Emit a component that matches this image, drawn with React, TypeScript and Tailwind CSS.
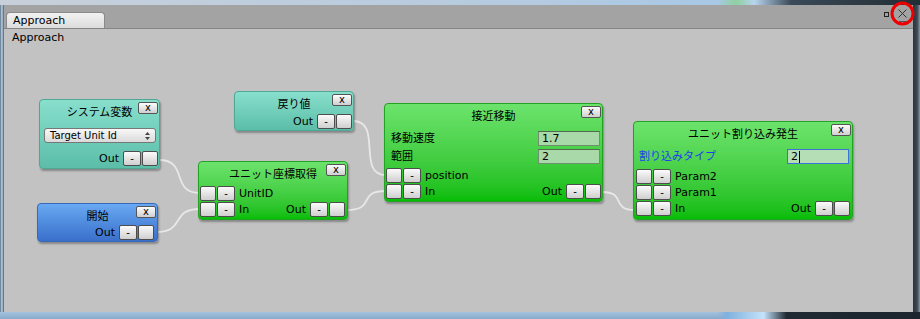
import React from "react";

const tones: Record<string, string> = {
    teal: "border-[#4fa896] from-[#87dfcc] to-[#5bbea8]",
    blue: "border-[#3868b8] from-[#69a8f2] to-[#3a70cb]",
    green: "border-[#23a323] from-[#6ce36c] to-[#05bd05]",
};

const XBtn = () => (
    <div className="absolute right-[1px] top-[2px] w-[20px] h-[12px] rounded-[2px] border border-[#555] bg-linear-to-b from-[#fdfdfd] to-[#cfcfcf] flex items-center justify-center text-[10px] leading-none text-black pb-px">x</div>
);

const Blank = () => (
    <div className="w-[16px] h-[15px] rounded-[2px] border border-[#4d4d4d] bg-linear-to-b from-[#fbfbfb] to-[#cfcfcf]" />
);

const Minus = () => (
    <div className="w-[18px] h-[15px] rounded-[2px] border border-[#4d4d4d] bg-linear-to-b from-[#fbfbfb] to-[#cfcfcf] flex items-center justify-center text-[10px] leading-none text-black">-</div>
);

const InPort = ({ label }: { label: string }) => (
    <div className="flex items-center gap-px">
        <Blank />
        <Minus />
        <span className="ml-[3px] text-[11px] leading-none">{label}</span>
    </div>
);

const OutPort = () => (
    <div className="flex items-center gap-px">
        <span className="mr-[3px] text-[11px] leading-none">Out</span>
        <Minus />
        <Blank />
    </div>
);

const Node = ({ tone, title, className, children }: { tone: string; title: string; className: string; children?: React.ReactNode }) => (
    <div className={"absolute flex flex-col rounded-[4px] border bg-linear-to-b shadow-[1px_2px_2px_rgba(0,0,0,0.3)] text-black " + tones[tone] + " " + className}>
        <XBtn />
        <div className="mt-[5px] h-[16px] leading-[16px] text-center text-[11px]">{title}</div>
        {children}
    </div>
);

const Field = ({ label, value, className, focused }: { label: string; value: string; className: string; focused?: boolean }) => (
    <div className={"flex items-center justify-between h-[15px] " + className}>
        <span className={"text-[11px] leading-none " + (focused ? "text-[#1f3cf0]" : "")}>{label}</span>
        <div className={"w-[62px] h-[15px] border pl-[3px] text-[11px] leading-[13px] flex items-center " + (focused ? "border-[#3f6fd8] bg-[#b6deb6]" : "border-[#6f8f6f] border-t-[#4f6a4f] bg-[#a9d8a9]")}>
            {value}
            {focused && <span className="ml-px w-px h-[12px] bg-black" />}
        </div>
    </div>
);

export default function App() {
    return (
        <div className="relative w-[920px] h-[319px] flex flex-col bg-[#9fbad4] font-['DejaVu_Sans','Noto_Sans_CJK_JP',sans-serif]">
            <div className="h-[5px] bg-[linear-gradient(to_right,#c7d0da_0%,#b6cbe0_55%,#a8c8e6_78%,#8fd0a0_80%,#b8d4ee_82%,#3a4a58_86%,#222c34_100%)]" />
            <div className="flex-1 flex">
                <div className="w-[4px] bg-[linear-gradient(to_right,#5b6e80,#adc3d8_40%,#8ea8c0_75%,#3e4a56)]" />
                <div className="flex-1 flex flex-col">
                    <div className="h-[24px] flex items-end pl-[2px] bg-[#a3a3a3] border-b border-[#858585]">
                        <div className="w-[99px] h-[16px] rounded-t-[4px] border border-b-0 border-[#8a8a8a] bg-linear-to-b from-[#f2f2f2] to-[#dcdcdc] pl-[6px] text-[11px] leading-[15px] text-black">Approach</div>
                        <div className="ml-auto self-start flex items-start gap-[9px] pr-[6px] pt-[4px]">
                            <div className="mt-[3px] w-[5px] h-[5px] border border-[#222]" />
                            <div className="flex flex-col items-center">
                                <svg width="9" height="9" viewBox="0 0 9 9">
                                    <path d="M0.5 0.5 L8.5 8.5 M8.5 0.5 L0.5 8.5" stroke="#333" strokeWidth="1" />
                                </svg>
                                <div className="mt-[3px] w-[8px] h-px bg-[#555]" />
                            </div>
                        </div>
                    </div>
                    <div className="relative flex-1 bg-[#c2c2c2]">
                        <div className="pl-[8px] pt-[2px] text-[11px] leading-[14px] text-black">Approach</div>
                        <svg className="absolute inset-0" width="909" height="283">
                            <g fill="none" stroke="#ececec" strokeWidth="1.8" opacity="0.9">
                                <path d="M155 131 C185 131, 166 164, 196 164" />
                                <path d="M152 203 C182 203, 166 180, 196 180" />
                                <path d="M343 181 C373 181, 352 162, 382 162" />
                                <path d="M349 92 C379 92, 352 146, 382 146" />
                                <path d="M598 163 C623 163, 606 181, 631 181" />
                            </g>
                        </svg>

                        <Node tone="teal" title="システム変数" className="left-[35px] top-[70px] w-[121px] h-[70px]">
                            <div className="mt-[7px] ml-[4px] mr-[3px] h-[15px] rounded-[3px] border border-[#777] bg-linear-to-b from-[#f8f8f8] to-[#dadada] flex items-center justify-between pl-[5px] pr-[5px]">
                                <span className="text-[10px] leading-none">Target Unit Id</span>
                                <svg width="5" height="8" viewBox="0 0 5 8">
                                    <path d="M2.5 0 L5 3 L0 3 Z M0 5 L5 5 L2.5 8 Z" fill="#444" />
                                </svg>
                            </div>
                            <div className="mt-[8px] flex justify-end pr-[1px]">
                                <OutPort />
                            </div>
                        </Node>

                        <Node tone="teal" title="戻り値" className="left-[230px] top-[62px] w-[120px] h-[40px]">
                            <div className="mt-[1px] flex justify-end pr-[1px]">
                                <OutPort />
                            </div>
                        </Node>

                        <Node tone="blue" title="開始" className="left-[33px] top-[174px] w-[121px] h-[39px]">
                            <div className="flex justify-end pr-[3px]">
                                <OutPort />
                            </div>
                        </Node>

                        <Node tone="green" title="ユニット座標取得" className="left-[194px] top-[132px] w-[150px] h-[59px]">
                            <div className="mt-[3px] flex flex-col gap-px pl-[1px] pr-[2px]">
                                <InPort label="UnitID" />
                                <div className="flex items-center justify-between">
                                    <InPort label="In" />
                                    <OutPort />
                                </div>
                            </div>
                        </Node>

                        <Node tone="green" title="接近移動" className="left-[380px] top-[74px] w-[219px] h-[99px]">
                            <Field label="移動速度" value="1.7" className="mt-[6px] pl-[6px] pr-[2px]" />
                            <Field label="範囲" value="2" className="mt-[3px] pl-[6px] pr-[2px]" />
                            <div className="mt-[4px] flex flex-col gap-px pl-[1px] pr-[1px]">
                                <InPort label="position" />
                                <div className="flex items-center justify-between">
                                    <InPort label="In" />
                                    <OutPort />
                                </div>
                            </div>
                        </Node>

                        <Node tone="green" title="ユニット割り込み発生" className="left-[629px] top-[92px] w-[220px] h-[99px]">
                            <Field label="割り込みタイプ" value="2" focused className="mt-[6px] pl-[5px] pr-[3px]" />
                            <div className="mt-[5px] flex flex-col gap-px pl-[2px] pr-[2px]">
                                <InPort label="Param2" />
                                <InPort label="Param1" />
                                <div className="flex items-center justify-between">
                                    <InPort label="In" />
                                    <OutPort />
                                </div>
                            </div>
                        </Node>
                    </div>
                </div>
                <div className="w-[7px] bg-[linear-gradient(to_right,#2a343d,#3c4852_60%,#8a9aa8)]" />
            </div>
            <div className="h-[7px] bg-[linear-gradient(to_bottom,#a4c2de,#88aacb)]">
                <div className="h-full bg-[linear-gradient(to_right,transparent_0%,transparent_78%,#7fb0dc_79%,#c4e2fa_83%,#1f2a33_85.5%,#1c252d_100%)]" />
            </div>
            <svg className="absolute left-[890px] top-[1px]" width="25" height="25" viewBox="0 0 25 25">
                <circle cx="12.5" cy="12.5" r="10.5" fill="none" stroke="#ee0000" strokeWidth="3" />
            </svg>
        </div>
    );
}
